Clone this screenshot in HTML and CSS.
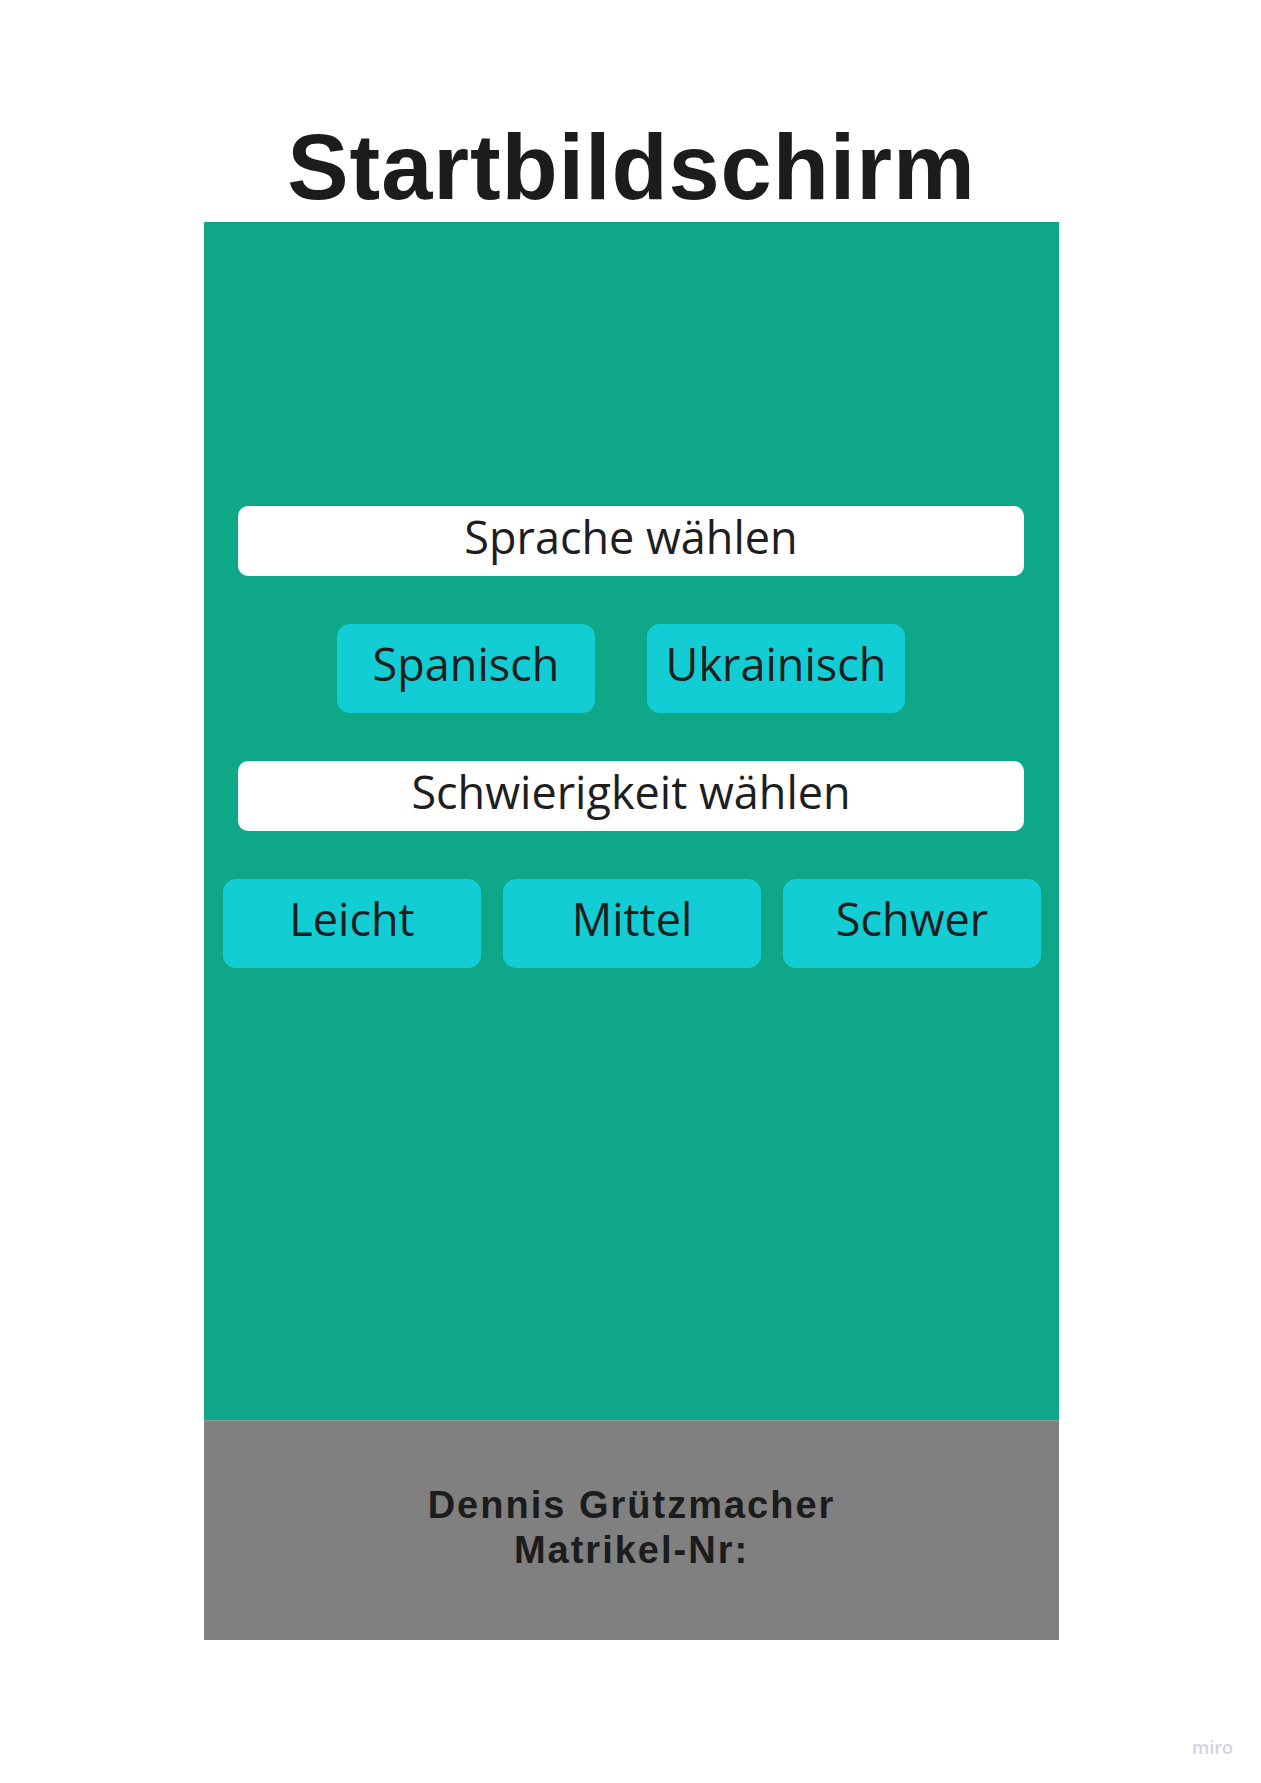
FILE: index.html
```html
<!DOCTYPE html>
<html lang="de">
<head>
<meta charset="utf-8">
<title>Startbildschirm</title>
<link rel="stylesheet" href="styles.css">
</head>
<body>
<div class="page">
  <div class="column">
    <h1 class="title">Startbildschirm</h1>
    <div class="screen">
      <div class="label">Sprache wählen</div>
      <div class="row row-lang">
        <div class="btn">Spanisch</div>
        <div class="btn">Ukrainisch</div>
      </div>
      <div class="label">Schwierigkeit wählen</div>
      <div class="row row-level">
        <div class="btn">Leicht</div>
        <div class="btn">Mittel</div>
        <div class="btn">Schwer</div>
      </div>
    </div>
    <div class="footer">
      <div class="footer-line">Dennis Grützmacher</div>
      <div class="footer-line">Matrikel-Nr:</div>
    </div>
  </div>
  <div class="watermark">miro</div>
</div>
</body>
</html>
```

FILE: styles.css
```css
html, body {
  margin: 0;
  padding: 0;
  background: #ffffff;
}

.page {
  position: relative;
  width: 1261px;
  height: 1783px;
  overflow: hidden;
}

.column {
  width: 855px;
  margin-left: 204px;
  padding-top: 121px;
}

.title {
  margin: 0 0 9px 0;
  font-family: "Liberation Sans", Arial, sans-serif;
  font-weight: 700;
  font-size: 92px;
  line-height: 92px;
  letter-spacing: 0.9px;
  text-align: center;
  color: #1c1c1c;
}

.screen {
  height: 1198px;
  box-sizing: border-box;
  background: #0ea888;
  padding-top: 284px;
  display: flex;
  flex-direction: column;
}

.label {
  margin-left: 34px;
  width: 786px;
  height: 70px;
  box-sizing: border-box;
  padding-bottom: 10px;
  background: #ffffff;
  border-radius: 10px;
  display: flex;
  align-items: center;
  justify-content: center;
  font-family: "Open Sans", sans-serif;
  font-size: 45px;
  color: #1e1e1e;
  margin-bottom: 48px;
}

.row {
  display: flex;
  margin-bottom: 48px;
}

.row-lang {
  padding-left: 133px;
  gap: 52px;
}

.row-level {
  padding-left: 19px;
  gap: 22px;
}

.btn {
  width: 258px;
  height: 89px;
  box-sizing: border-box;
  padding-bottom: 10px;
  background: #13cdd4;
  border-radius: 13px;
  display: flex;
  align-items: center;
  justify-content: center;
  font-family: "Open Sans", sans-serif;
  font-size: 45px;
  color: #1e1e1e;
}

.footer {
  height: 220px;
  box-sizing: border-box;
  background: #808080;
  padding-top: 62px;
  border-top: 1px solid #8a9e97;
}

.footer-line {
  font-family: "Liberation Sans", Arial, sans-serif;
  font-weight: 700;
  font-size: 38px;
  line-height: 44.5px;
  letter-spacing: 2px;
  text-align: center;
  color: #1c1c1c;
}

.watermark {
  position: absolute;
  left: 1192px;
  top: 1735px;
  font-family: "Open Sans", sans-serif;
  font-weight: 600;
  font-size: 18px;
  line-height: 24px;
  color: #d2d2e0;
}
```
